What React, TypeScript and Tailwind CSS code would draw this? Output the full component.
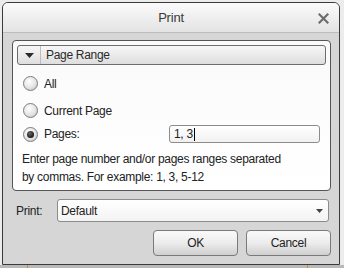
import React from 'react';

const font = { fontFamily: '"Liberation Sans", Arial, sans-serif' };

const Radio = ({ checked }: { checked?: boolean }) => (
  <span className="w-[15px] h-[15px] rounded-full border border-[#7c7c7c] bg-[radial-gradient(circle_at_40%_35%,#ffffff_0%,#e4e4e4_55%,#b9b9b9_100%)] flex items-center justify-center shrink-0">
    {checked && (
      <span className="w-[7px] h-[7px] rounded-full bg-[radial-gradient(circle_at_40%_35%,#6a6a6a_0%,#1a1a1a_70%)]" />
    )}
  </span>
);

const RadioRow = ({ label, checked }: { label: string; checked?: boolean }) => (
  <label className="flex items-center gap-[6px] pl-[6px] h-[15px]">
    <Radio checked={checked} />
    <span className="text-[12px] text-[#222] tracking-[-0.3px]">{label}</span>
  </label>
);

export default function App() {
  return (
    <div className="w-[344px] h-[268px] bg-[#ececec] flex flex-col overflow-hidden" style={font}>
      <div className="ml-[2px] mt-[2px] w-[338px] h-[263px] border border-[#3a3a3a] rounded-t-[6px] bg-[#d6d6d6] flex flex-col overflow-hidden">
        {/* title bar */}
        <div className="relative h-[30px] shrink-0 bg-gradient-to-b from-[#fbfbfb] to-[#e3e3e3] border-b border-[#bdbdbd] flex items-center justify-center">
          <span className="text-[13px] text-[#3a3a3a] tracking-[-0.2px]">Print</span>
          <svg className="absolute right-[10px] top-[10px]" width="11" height="11" viewBox="0 0 11 11">
            <path d="M1.5 1.5 L9.5 9.5 M9.5 1.5 L1.5 9.5" stroke="#6e6e6e" strokeWidth="2.2" strokeLinecap="square" />
          </svg>
        </div>

        <div className="pl-[9px] pt-[7px] flex flex-col">
          {/* page range panel */}
          <div className="w-[319px] h-[151px] border border-[#555] rounded-[4px] bg-gradient-to-b from-[#fafafa] to-white p-[4px] flex flex-col">
            <div className="h-[22px] border border-[#6d6d6d] rounded-[3px] bg-gradient-to-b from-[#f7f7f7] to-[#dedede] flex items-center">
              <div className="w-[23px] h-full border-r border-[#bdbdbd] flex items-center justify-center">
                <svg width="9" height="5" viewBox="0 0 9 5">
                  <path d="M0 0 H9 L4.5 5 Z" fill="#2a2a2a" />
                </svg>
              </div>
              <span className="pl-[5px] text-[12px] text-[#2a2a2a] tracking-[-0.3px]">Page Range</span>
            </div>

            <div className="mt-[11px]">
              <RadioRow label="All" />
            </div>
            <div className="mt-[12px]">
              <RadioRow label="Current Page" />
            </div>
            <div className="mt-[7px] h-[18px] flex items-center">
              <RadioRow label="Pages:" checked />
              <div className="ml-auto mr-[6px] w-[151px] h-[18px] border border-[#8c8c8c] rounded-[3px] bg-gradient-to-b from-white to-[#f1f1f1] flex items-center pl-[4px]">
                <span className="text-[12px] text-[#222] tracking-[-0.3px]">1, 3</span>
                <span className="w-[1px] h-[13px] bg-black ml-[1px]" />
              </div>
            </div>
            <p className="mt-[7px] pl-[5px] text-[12px] leading-[18px] text-[#222] tracking-[-0.3px]">
              Enter page number and/or pages ranges separated
              <br />
              by commas. For example: 1, 3, 5-12
            </p>
          </div>

          {/* print select */}
          <div className="mt-[8px] flex items-center h-[23px]">
            <span className="pl-[4px] w-[45px] text-[12px] text-[#222] tracking-[-0.3px]">Print:</span>
            <div className="w-[272px] h-[23px] border border-[#8c8c8c] rounded-[3px] bg-gradient-to-b from-white to-[#f3f3f3] flex items-center pl-[3px] pr-[5px]">
              <span className="text-[12px] text-[#222] tracking-[-0.3px]">Default</span>
              <svg className="ml-auto" width="7" height="4" viewBox="0 0 7 4">
                <path d="M0 0 H7 L3.5 4 Z" fill="#444" />
              </svg>
            </div>
          </div>

          {/* buttons */}
          <div className="mt-[8px] flex justify-end gap-[8px] pr-[8px]">
            <button className="w-[85px] h-[26px] border border-[#7a7a7a] rounded-[4px] bg-gradient-to-b from-[#fafafa] via-[#ececec] to-[#cfcfcf] text-[12px] text-[#222] tracking-[-0.3px]">
              OK
            </button>
            <button className="w-[85px] h-[26px] border border-[#7a7a7a] rounded-[4px] bg-gradient-to-b from-[#fafafa] via-[#ececec] to-[#cfcfcf] text-[12px] text-[#222] tracking-[-0.3px]">
              Cancel
            </button>
          </div>
        </div>
      </div>
      <div className="flex-1 bg-[#b9b9b9] flex">
        <div className="ml-[27px] w-[1px] bg-[#d08a3a]" />
        <div className="ml-[279px] w-[1px] bg-[#d08a3a]" />
      </div>
    </div>
  );
}
